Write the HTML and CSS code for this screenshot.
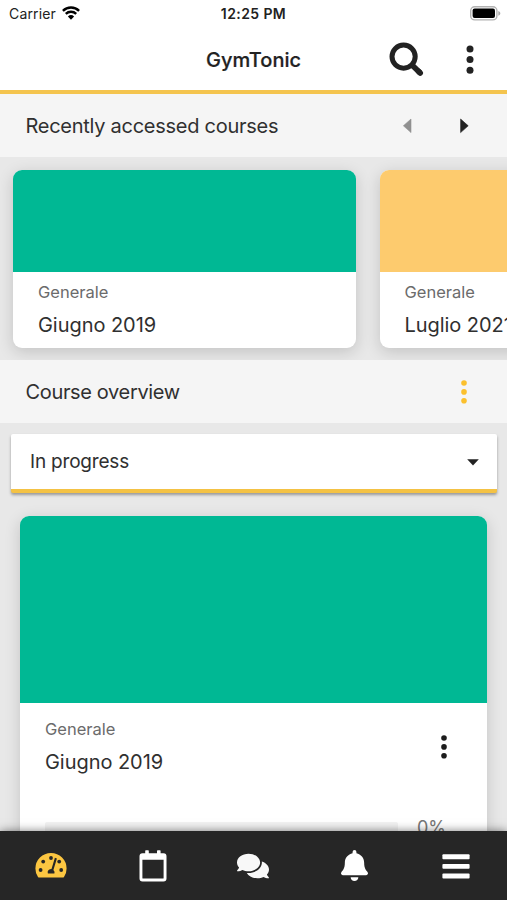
FILE: index.html
```html
<!DOCTYPE html>
<html lang="en">
<head>
<meta charset="utf-8">
<title>GymTonic</title>
<link rel="stylesheet" href="styles.css">
</head>
<body>
<div class="app">
  <div class="status">
    <div class="carrier"><span>Carrier</span>
      <svg width="18" height="14" viewBox="0 0 18 14" fill="none" stroke="#000" stroke-width="2.4"><path d="M.9 4.8a11.6 11.6 0 0 1 16.2 0M3.8 7.9a7.5 7.5 0 0 1 10.4 0"/><path d="M9 13.7 5.9 10.5a4.5 4.5 0 0 1 6.2 0Z" fill="#000" stroke="none"/></svg>
    </div>
    <span class="time">12:25 PM</span>
    <svg class="battery" width="31" height="15" viewBox="0 0 31 15"><rect x=".7" y=".7" width="26.2" height="13.2" rx="4" fill="#fff" stroke="#b2b2b2" stroke-width="1.4"/><rect x="2.6" y="2.5" width="22.4" height="9.6" rx="2" fill="#000"/><path d="M28.3 5c2.7 1 2.700 3.800 0 4.800z" fill="#aaa"/></svg>
  </div>
  <header class="navbar">
    <h1>GymTonic</h1>
    <div class="nav-actions">
      <svg width="36" height="36" viewBox="0 0 36 36" fill="none" stroke="#222"><circle cx="14.6" cy="14.6" r="11.6" stroke-width="5"/><path d="m23 23 8 7.8" stroke-width="5.6"/><path d="m29.700 29.500 1.500 1.500" stroke-width="5.6" stroke-linecap="round"/></svg>
      <svg width="8" height="30" viewBox="0 0 8 30" fill="#222"><circle cx="4" cy="4" r="3.5"/><circle cx="4" cy="14.600" r="3.5"/><circle cx="4" cy="25.300" r="3.5"/></svg>
    </div>
  </header>
  <main class="content">
    <section>
      <div class="section-head">
        <h2 class="recent-title">Recently accessed courses</h2>
        <div class="arrows">
          <svg width="9" height="16" viewBox="0 0 9 16" fill="#909090"><path d="M8 1v13.600L.4 7.800z" stroke="#909090" stroke-width=".6" stroke-linejoin="round"/></svg>
          <svg width="9" height="16" viewBox="0 0 9 16" fill="#222"><path d="M.6 1v13.600l7.600-6.800z" stroke="#222" stroke-width=".6" stroke-linejoin="round"/></svg>
        </div>
      </div>
      <div class="strip">
        <article class="card small"><div class="cover"></div><div class="info"><p>Generale</p><h3>Giugno 2019</h3></div></article>
        <article class="card small"><div class="cover yellow"></div><div class="info"><p>Generale</p><h3>Luglio 2021</h3></div></article>
      </div>
    </section>
    <section>
      <div class="section-head">
        <h2 class="overview-title">Course overview</h2>
        <svg class="more" width="6" height="24" viewBox="0 0 6 24" fill="#fbc02d"><circle cx="3" cy="3" r="2.800"/><circle cx="3" cy="11.900" r="2.800"/><circle cx="3" cy="20.800" r="2.800"/></svg>
      </div>
      <div class="select"><span>In progress</span><svg width="12" height="7" viewBox="0 0 12 7"><path d="M.2.2h11.600L6 6.600z" fill="#222"/></svg></div>
      <article class="card large">
        <div class="cover"></div>
        <div class="row">
          <div class="info"><p>Generale</p><h3>Giugno 2019</h3></div>
          <svg class="more" width="6" height="24" viewBox="0 0 6 24" fill="#1c1c1c"><circle cx="3" cy="3" r="2.800"/><circle cx="3" cy="11.900" r="2.800"/><circle cx="3" cy="20.800" r="2.800"/></svg>
        </div>
        <div class="progress"><div class="track"></div><span>0%</span></div>
      </article>
    </section>
  </main>
  <nav class="tabs">
    <div><svg width="32" height="32" viewBox="0 0 32 32"><path d="M3 27Q.4 23.500.4 18.500a15.600 15.600 0 0 1 31.200 0q0 5-2.600 8.500-.4.600-1.400.600H4.400q-1 0-1.400-.600z" fill="#fcc641"/><g fill="#262626"><circle cx="5.600" cy="20" r="1.900"/><circle cx="8.200" cy="11.600" r="1.900"/><circle cx="16" cy="8" r="1.900"/><circle cx="24.200" cy="11.600" r="1.900"/><circle cx="26.200" cy="20" r="1.900"/><path d="m19.900 7.800 2 .6-3.500 11.700q1.800 1.600 1 3.300h-6.500q-1-3 2-4.200l1.600-.3z"/></g></svg></div>
    <div><svg class="calendar" width="28" height="32" viewBox="0 0 28 32" fill="#fff"><path d="M3.500 3.200h21q3 0 3 3v22.300q0 3-3 3h-21q-3 0-3-3V6.200q0-3 3-3zM3.400 9.700v18.300q0 .5.500.5h20.200q.5 0 .5-.5V9.700z" fill-rule="evenodd"/><rect x="6.200" y=".2" width="3.600" height="6" rx=".7"/><rect x="18" y=".2" width="3.600" height="6" rx=".7"/></svg></div>
    <div><svg width="32" height="28" viewBox="0 0 576 512" preserveAspectRatio="none" fill="#f8f8f8"><path d="M416 192c0-88.400-93.100-160-208-160S0 103.600 0 192c0 34.300 14.100 65.900 38 92-13.400 30.200-35.500 54.200-35.800 54.500-2.200 2.300-2.800 5.700-1.500 8.700S4.800 352 8 352c36.600 0 66.900-12.300 88.700-25 32.200 15.700 70.300 25 111.300 25 114.900 0 208-71.600 208-160zm122 220c23.900-26 38-57.700 38-92 0-66.900-53.500-124.200-129.300-148.100.9 6.600 1.300 13.300 1.300 20.100 0 105.900-107.700 192-240 192-10.800 0-21.300-.8-31.700-1.900C207.800 439.600 281.800 480 368 480c41 0 79.100-9.200 111.300-25 21.800 12.700 52.100 25 88.700 25 3.200 0 6.100-1.900 7.300-4.800 1.300-2.900.7-6.300-1.500-8.700-.3-.3-22.400-24.200-35.800-54.500z"/></svg></div>
    <div><svg width="27" height="31" viewBox="0 0 448 512" preserveAspectRatio="none" fill="#fff"><path d="M224 512c35.300 0 63.900-28.600 63.900-64H160.100c0 35.400 28.600 64 63.900 64zm215.400-149.700c-19.300-20.800-55.500-52-55.500-154.300 0-77.700-54.500-139.900-127.900-155.200V32a32 32 0 1 0-64 0v20.800C118.600 68.100 64.100 130.300 64.100 208c0 102.300-36.200 133.500-55.500 154.300C2.600 368.700 0 376.500 0 384c.1 16.400 13 32 32.100 32h383.800c19.100 0 32-15.600 32.100-32 0-7.500-2.600-15.300-8.600-21.700z"/></svg></div>
    <div><svg class="menu" width="28" height="26" viewBox="0 0 28 26" fill="#fff"><rect x=".4" y=".3" width="27.200" height="5" rx="1"/><rect x=".4" y="10" width="27.200" height="4.700" rx="1"/><rect x=".4" y="19.500" width="27.200" height="5" rx="1"/></svg></div>
  </nav>
</div>
</body>
</html>
```
FILE: styles.css
```css
* { box-sizing: border-box; }
body, h1, h2, h3, p { margin: 0; }
body { font-family: Inter, "Liberation Sans", sans-serif; color: #303030; }
svg { display: block; flex: none; }
.app { width: 507px; height: 900px; display: flex; flex-direction: column; overflow: hidden; background: #fff; }
.status { height: 28px; flex: none; display: grid; grid-template-columns: 1fr auto 1fr; align-items: center; padding: 0 6px; color: #222; font-size: 14px; line-height: 28px; }
.carrier { display: flex; gap: 6px; align-items: center; padding-left: 3px; letter-spacing: .15px; }
.carrier svg { margin-top: -3px; }
.time { font-weight: 600; font-size: 14px; letter-spacing: .4px; }
.battery { justify-self: end; margin-top: -1px; }
.navbar { height: 66px; flex: none; border-bottom: 4px solid #f4c44e; display: grid; grid-template-columns: 1fr auto 1fr; align-items: center; padding-top: 1px; }
h1 { grid-column: 2; font-size: 20px; line-height: 24px; font-weight: 500; color: #222; -webkit-text-stroke: .2px #222; }
.nav-actions { display: flex; justify-content: flex-end; align-items: center; gap: 41px; padding-right: 33px; }
.content { flex: 1; min-height: 0; overflow: hidden; background: #e8e8e8; }
.section-head { height: 63px; background: #f5f5f5; display: flex; align-items: center; justify-content: space-between; padding: 0 38px 0 25.500px; position: relative; }
h2 { font-size: 20px; line-height: 24px; font-weight: 400; white-space: nowrap; }
.recent-title { letter-spacing: -.27px; }
.overview-title { letter-spacing: -.35px; }
.section-head > .more { margin-right: 2px; }
.arrows { display: flex; gap: 48px; }
.strip { height: 203px; padding: 12.500px 13px; display: flex; gap: 24px; overflow: hidden; }
.card { background: #fff; border-radius: 9px; overflow: hidden; box-shadow: 0 4px 16px rgba(0,0,0,.16); }
.small { flex: 0 0 342.500px; height: 178.500px; }
.cover { height: 102.500px; background: #00b894; }
.yellow { background: #fdcb6e; }
.info { padding: 8px 25px; }
.info p { font-size: 16.500px; line-height: 24px; color: #6b6b6b; }
.info h3 { font-size: 20px; line-height: 24px; font-weight: 400; letter-spacing: -.05px; margin-top: 9px; white-space: nowrap; }
.select { height: 59px; margin: 10.500px 10px 0 10.500px; background: #fff; border-bottom: 4px solid #f4c244; border-radius: 2px; box-shadow: 0 2px 3px rgba(0,0,0,.35); display: flex; align-items: center; justify-content: space-between; padding: 2px 18px 0 19.500px; font-size: 19px; line-height: 24px; letter-spacing: -.2px; }
.large { margin: 23.500px 20px 0 20px; height: 400px; }
.large .cover { height: 186.500px; }
.row { display: flex; justify-content: space-between; height: 96px; padding-top: 6px; }
.row .info { padding-top: 8px; }
.row .more { margin: 26px 40px 0 0; }
.progress { display: flex; padding: 17px 40px 0 25px; font-size: 18px; line-height: 24px; color: #777; }
.track { flex: 0 0 353px; height: 12px; margin: 6px 19px 0 0; background: #f3f3f3; border-radius: 2px; }
.tabs { height: 69px; flex: none; background: #262626; display: grid; grid-template-columns: repeat(5, 1fr); box-shadow: 0 0 9px rgba(0,0,0,.5); position: relative; }
.tabs div { display: flex; align-items: center; justify-content: center; }
.calendar { margin-left: 2px; }
.menu { margin-top: 2px; }
```
